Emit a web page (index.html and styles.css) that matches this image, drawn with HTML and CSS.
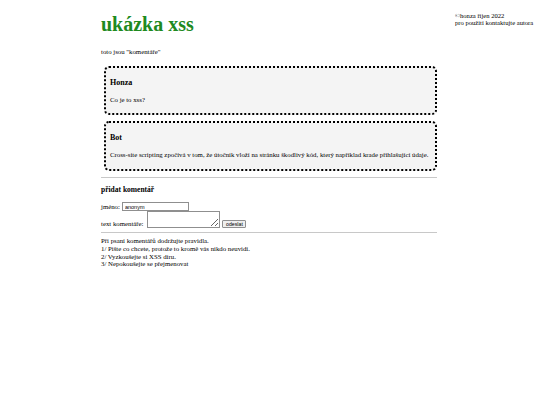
FILE: index.html
```html
<!DOCTYPE html>
<html lang="cs">
<head>
<meta charset="utf-8">
<title>ukázka xss</title>
<link rel="stylesheet" href="styles.css">
</head>
<body>
<div class="credit">©honza říjen 2022<br>pro použití kontaktujte autora</div>
<div class="page">
  <h1 class="title">ukázka xss</h1>
  <p class="intro">toto jsou "komentáře"</p>
  <div class="comment">
    <h3 class="author">Honza</h3>
    <p class="text">Co je to xss?</p>
  </div>
  <div class="comment">
    <h3 class="author">Bot</h3>
    <p class="text">Cross-site scripting zpočívá v tom, že útočník vloží na stránku škodlivý kód, který například krade přihlašující údaje.</p>
  </div>
  <hr class="rule">
  <h4 class="form-title">přidat komentář</h4>
  <form class="form">
    <div class="row row-name">
      <label class="label" for="jmeno">jméno:</label>
      <input class="field" id="jmeno" type="text" value="anonym">
    </div>
    <div class="row row-text">
      <label class="label" for="text">text komentáře:</label>
      <textarea class="area" id="text"></textarea>
      <button class="send" type="button">odeslat</button>
    </div>
  </form>
  <hr class="rule rule-bottom">
  <div class="rules">
    Při psaní komentářů dodržujte pravidla.<br>
    1/ Pište co chcete, protože to kromě vás nikdo neuvidí.<br>
    2/ Vyzkoušejte si XSS díru.<br>
    3/ Nepokoušejte se přejmenovat
  </div>
</div>
</body>
</html>
```
FILE: styles.css
```css
html, body {
  margin: 0;
  padding: 0;
  background: #fff;
}
body {
  font-family: "Liberation Serif", "Times New Roman", serif;
  font-size: 6.8px;
  line-height: 7.7px;
  color: #000;
}
.credit {
  float: right;
  margin-top: 12px;
  margin-right: 3px;
  width: 82px;
  font-size: 6.6px;
  line-height: 7.4px;
}
.page {
  width: 338px;
  margin: 0 auto;
  padding-top: 12px;
}
.title {
  margin: 0;
  font-size: 20px;
  line-height: 24px;
  font-weight: bold;
  color: #1f8a1f;
}
.intro {
  margin: 12px 0 0;
}
.comment {
  margin: 10px 2px 0 3px;
  border: 2px dotted #000;
  border-radius: 5px;
  background: #f4f4f4;
  padding: 10px 4px 10px;
}
.comment + .comment {
  margin-top: 6px;
}
.author {
  margin: 0;
  font-size: 8px;
  line-height: 10px;
  font-weight: bold;
}
.text {
  margin: 8px 0 0;
}
.rule {
  margin: 6px 2px 0 0;
  border: 0;
  border-top: 1px solid #c8c8c8;
  height: 0;
}
.form-title {
  margin: 7px 0 0;
  font-size: 7.5px;
  line-height: 9px;
  font-weight: bold;
}
.form {
  margin: 8px 0 0;
}
.row {
  display: flex;
  gap: 2px;
}
.row-name {
  align-items: center;
}
.row-text {
  align-items: flex-end;
}
.label {
  line-height: 7.7px;
}
.field {
  box-sizing: border-box;
  width: 67px;
  height: 9px;
  margin: 0;
  padding: 0 2px;
  border: 1px solid #8f8f8f;
  background: #fff;
  font-family: "Liberation Sans", Arial, sans-serif;
  font-size: 5.5px;
  line-height: 7px;
  color: #000;
}
.area {
  box-sizing: border-box;
  width: 73px;
  height: 17px;
  margin: 0 0 0 2px;
  padding: 1px;
  border: 1px solid #8f8f8f;
  background: #fff;
  font-size: 5.5px;
}
.send {
  box-sizing: border-box;
  width: 24px;
  height: 8px;
  margin: 0;
  padding: 0;
  border: 1px solid #8f8f8f;
  border-radius: 1px;
  background: #efefef;
  font-family: "Liberation Sans", Arial, sans-serif;
  font-size: 5.2px;
  line-height: 6px;
  color: #000;
}
.rule-bottom {
  margin-top: 4px;
}
.rules {
  margin-top: 4px;
}
```
